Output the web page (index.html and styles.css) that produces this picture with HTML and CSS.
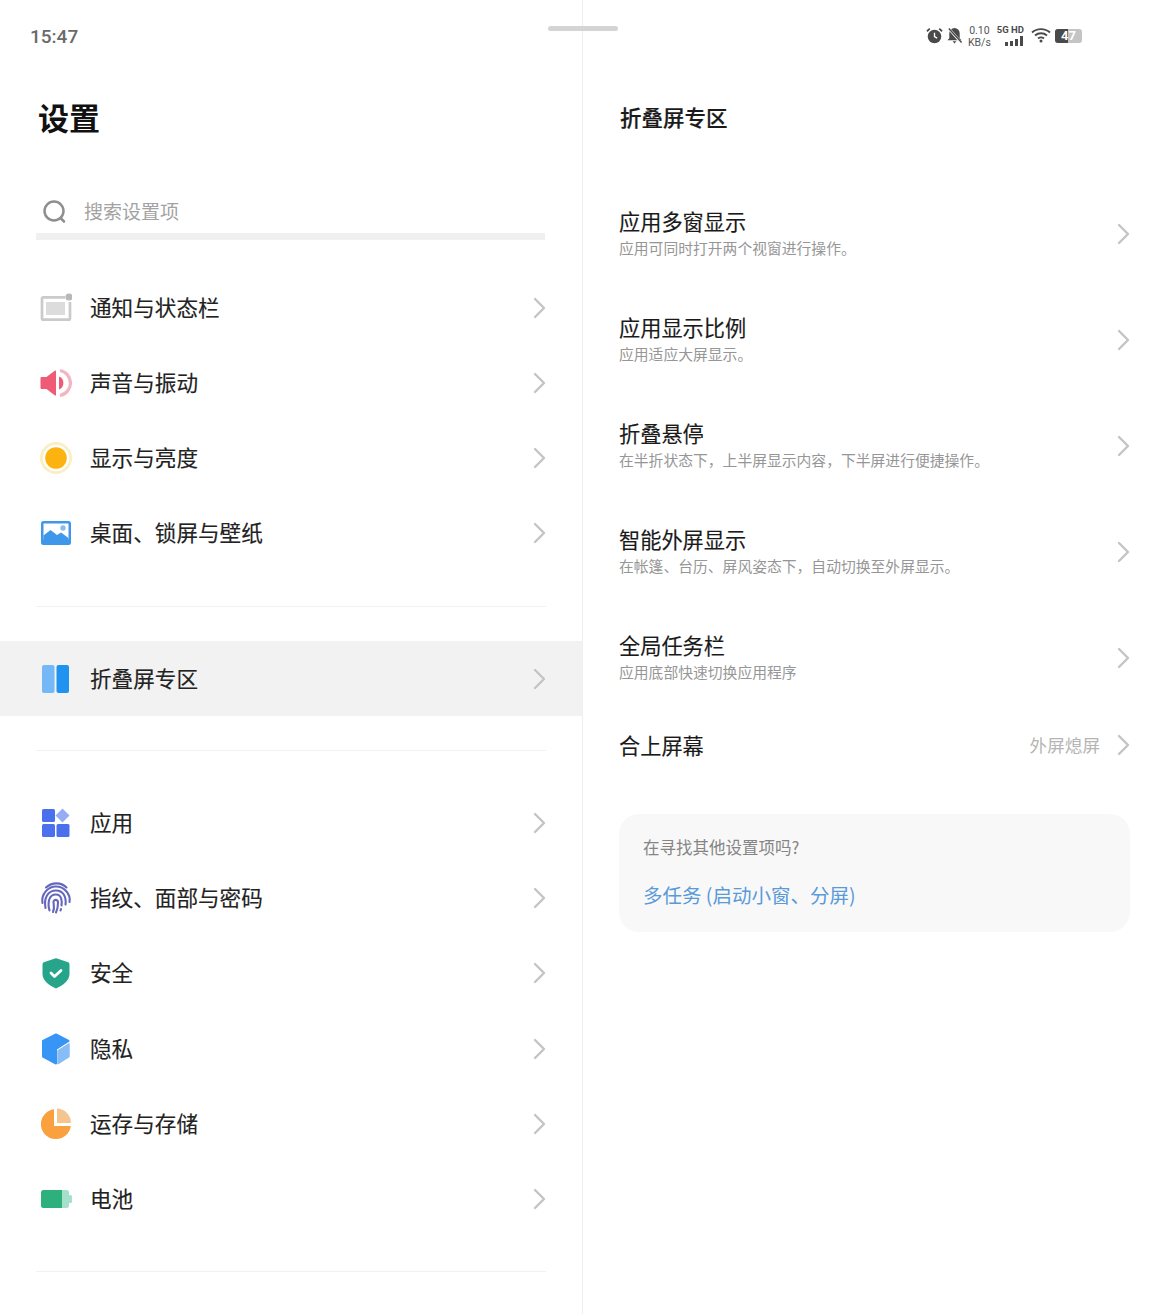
FILE: index.html
```html
<!DOCTYPE html>
<html lang="zh-CN">
<head>
<meta charset="utf-8">
<title>设置</title>
<link rel="stylesheet" href="styles.css">
</head>
<body>
<svg class="defs" width="0" height="0" aria-hidden="true"><defs>
<symbol id="chev" viewBox="0 0 14 22"><path d="M3 2l9 9-9 9" fill="none" stroke="#c4c4c4" stroke-width="2.400" stroke-linecap="round" stroke-linejoin="round"/></symbol>
</defs></svg>
<div class="handle"></div>
<main class="page">
<section class="left">
  <div class="time">15:47</div>
  <h1 class="title">设置</h1>
  <div class="search">
    <svg class="search-ic" viewBox="0 0 24 24"><circle cx="11" cy="11" r="9.500" fill="none" stroke="#8f8f8f" stroke-width="2.500"/><path d="M17.500 18l3.500 3.500" stroke="#8f8f8f" stroke-width="2.500" stroke-linecap="round"/></svg>
    <span>搜索设置项</span>
  </div>
  <ul class="group group-first">
    <li class="row"><svg class="ic" viewBox="0 0 32 32"><path d="M25 5.300H3.500a1.500 1.500 0 0 0-1.500 1.500v19.400a1.500 1.500 0 0 0 1.500 1.500h25a1.500 1.500 0 0 0 1.500-1.500V10" fill="none" stroke="#cacaca" stroke-width="2.700"/><rect x="6" y="10" width="19" height="13" fill="#dcdcdc"/><circle cx="29" cy="5" r="3.600" fill="#b8b8b8"/></svg><span class="lbl">通知与状态栏</span><svg class="chev"><use href="#chev"/></svg></li>
    <li class="row"><svg class="ic" viewBox="0 0 32 32"><path d="M1.500 10h5L15 3.500a.8.8 0 0 1 1 .6v23.800a.8.800 0 0 1-1 .6L6.500 22h-5a1 1 0 0 1-1-1V11a1 1 0 0 1 1-1z" fill="#ef5a75"/><path d="M19 9.500a7 7 0 0 1 0 13z" fill="#ef5a75"/><path d="M20 3.500a12.700 12.700 0 0 1 0 25" fill="none" stroke="#f3b5c2" stroke-width="3.200"/></svg><span class="lbl">声音与振动</span><svg class="chev"><use href="#chev"/></svg></li>
    <li class="row"><svg class="ic" viewBox="0 0 32 32"><circle cx="16" cy="16" r="16" fill="#faeec4"/><circle cx="16" cy="16" r="13.200" fill="#fff"/><circle cx="16" cy="16" r="10.800" fill="#fdb30f"/></svg><span class="lbl">显示与亮度</span><svg class="chev"><use href="#chev"/></svg></li>
    <li class="row"><svg class="ic" viewBox="0 0 32 32"><rect x="1" y="4" width="30" height="24" rx="2.500" fill="#3f97ea"/><rect x="3.500" y="6.500" width="25" height="16" fill="#fff"/><path d="M3.500 23v-4.500l7-5.500 6.500 5 4-2.500 7.500 5.500V23z" fill="#3f97ea"/><circle cx="23" cy="11" r="2.700" fill="#8cbcec"/></svg><span class="lbl">桌面、锁屏与壁纸</span><svg class="chev"><use href="#chev"/></svg></li>
  </ul>
  <ul class="group group-mid">
    <li class="row row-on"><svg class="ic" viewBox="0 0 32 32"><rect x="2" y="2" width="12.500" height="28" rx="2" fill="#74b8f8"/><rect x="16.500" y="2" width="12.500" height="28" rx="2" fill="#2093f0"/></svg><span class="lbl">折叠屏专区</span><svg class="chev"><use href="#chev"/></svg></li>
  </ul>
  <ul class="group group-last">
    <li class="row"><svg class="ic" viewBox="0 0 32 32"><rect x="2" y="2" width="13" height="13" rx="1.500" fill="#4a70ee"/><path d="M22.500 1.500l7 7-7 7-7-7z" fill="#95aef3"/><rect x="2" y="17" width="13" height="13" rx="1.500" fill="#4a70ee"/><rect x="16.500" y="17" width="13" height="13" rx="1.500" fill="#4a70ee"/></svg><span class="lbl">应用</span><svg class="chev"><use href="#chev"/></svg></li>
    <li class="row"><svg class="ic" viewBox="0 0 32 32"><g fill="none" stroke="#6567bd" stroke-width="2.100" stroke-linecap="round"><path d="M6 5.500C12 0 21 0 26.500 5.500"/><path d="M2.500 21C1 12 8 4.500 16 4.500S31 12 29.500 20"/><path d="M5.500 26C3.500 16 8 8.500 16 8.500c7 0 10.500 6 9.500 14"/><path d="M9.500 28.500C7.500 21 8.500 12.500 16 12.500c6 0 6 7 5.500 11"/><path d="M13 30c2-4 .5-8 .5-10 0-3 5-3 4.500 1 0 3-.5 6-2 9.500"/><path d="M20.500 28.500l.5-1.500"/></g></svg><span class="lbl">指纹、面部与密码</span><svg class="chev"><use href="#chev"/></svg></li>
    <li class="row"><svg class="ic" viewBox="0 0 32 32"><path d="M15 1.500a3 3 0 0 1 2 0l10.500 3.500a2.500 2.500 0 0 1 2 2.500V17c0 7-7 11.500-13.500 14.500C9.500 28.500 2.500 24 2.500 17V7.500a2.500 2.500 0 0 1 2-2.500z" fill="#27a58a"/><path d="M11 16l3.500 3.500 6.500-6" fill="none" stroke="#fff" stroke-width="2.800" stroke-linecap="round" stroke-linejoin="round"/></svg><span class="lbl">安全</span><svg class="chev"><use href="#chev"/></svg></li>
    <li class="row"><svg class="ic" viewBox="0 0 32 32"><path d="M16 1.500l12.500 6.500-12.500 8v14.500L3 23.500V8z" fill="#3795f5" stroke="#3795f5" stroke-width="2" stroke-linejoin="round"/><path d="M29 11v12.500l-11 7V18z" fill="#86bdf6" stroke="#86bdf6" stroke-width="1.500" stroke-linejoin="round"/></svg><span class="lbl">隐私</span><svg class="chev"><use href="#chev"/></svg></li>
    <li class="row"><svg class="ic" viewBox="0 0 32 32"><path d="M14 1.200A15 15 0 1 0 30.800 18H14z" fill="#f9a03f"/><path d="M17 .5A14.500 14.500 0 0 1 31 15H17z" fill="#f6c48d"/></svg><span class="lbl">运存与存储</span><svg class="chev"><use href="#chev"/></svg></li>
    <li class="row"><svg class="ic" viewBox="0 0 32 32"><path d="M3.500 7H22v18H3.500A2.500 2.500 0 0 1 1 22.500v-13A2.500 2.500 0 0 1 3.500 7z" fill="#2db07c"/><path d="M22 7h4.500A2.500 2.500 0 0 1 29 9.500v13a2.500 2.500 0 0 1-2.500 2.500H22z" fill="#a5e0ca"/><rect x="28" y="12" width="4" height="8" rx="1.500" fill="#a5e0ca"/></svg><span class="lbl">电池</span><svg class="chev"><use href="#chev"/></svg></li>
  </ul>
</section>
<section class="right">
  <div class="status">
    <svg class="st-ic" viewBox="0 0 18 18"><circle cx="9" cy="10" r="7.200" fill="#4a4a4a"/><path d="M9 6v4.200l2.800 1.600" fill="none" stroke="#fff" stroke-width="1.400"/><path d="M1 4.500 4 1.800M17 4.500 14 1.800" stroke="#4a4a4a" stroke-width="1.800"/></svg>
    <svg class="st-ic" viewBox="0 0 18 18"><path d="M9 1a5.500 5.500 0 0 1 5.500 5.500v5.500l2 2h-15l2-2V6.500A5.500 5.500 0 0 1 9 1z" fill="#4a4a4a"/><path d="M7 15h4l-2 2.500z" fill="#4a4a4a"/><path d="M1.500 0l15 17" stroke="#fff" stroke-width="2.800"/><path d="M3 1.500l13.500 15" stroke="#4a4a4a" stroke-width="1.500"/></svg>
    <div class="speed"><span>0.10</span><span>KB/s</span></div>
    <div class="net"><span class="net-t">5G HD</span><span class="bars"><i class="b1"></i><i class="b2"></i><i class="b3"></i><i class="b4"></i></span></div>
    <svg class="st-wifi" viewBox="0 0 20 16"><g fill="none" stroke="#4a4a4a" stroke-width="1.900"><path d="M1 5.500c5-4.500 13-4.500 18 0"/><path d="M4 8.500c3.500-3 8.500-3 12 0"/><path d="M7 11.500c2-1.500 4-1.500 6 0"/></g><circle cx="10" cy="14" r="1.500" fill="#4a4a4a"/></svg>
    <div class="batt"><span class="batt-fill"></span><span class="batt-t">47</span></div>
  </div>
  <h2 class="sub-title">折叠屏专区</h2>
  <ul class="opts">
    <li class="opt"><div class="opt-txt"><span class="opt-t">应用多窗显示</span><span class="opt-d">应用可同时打开两个视窗进行操作。</span></div><svg class="chev"><use href="#chev"/></svg></li>
    <li class="opt"><div class="opt-txt"><span class="opt-t">应用显示比例</span><span class="opt-d">应用适应大屏显示。</span></div><svg class="chev"><use href="#chev"/></svg></li>
    <li class="opt"><div class="opt-txt"><span class="opt-t">折叠悬停</span><span class="opt-d">在半折状态下，上半屏显示内容，下半屏进行便捷操作。</span></div><svg class="chev"><use href="#chev"/></svg></li>
    <li class="opt"><div class="opt-txt"><span class="opt-t">智能外屏显示</span><span class="opt-d">在帐篷、台历、屏风姿态下，自动切换至外屏显示。</span></div><svg class="chev"><use href="#chev"/></svg></li>
    <li class="opt"><div class="opt-txt"><span class="opt-t">全局任务栏</span><span class="opt-d">应用底部快速切换应用程序</span></div><svg class="chev"><use href="#chev"/></svg></li>
    <li class="opt opt-s"><div class="opt-txt"><span class="opt-t">合上屏幕</span></div><span class="opt-v">外屏熄屏</span><svg class="chev"><use href="#chev"/></svg></li>
  </ul>
  <div class="card">
    <p class="card-q">在寻找其他设置项吗?</p>
    <p class="card-a">多任务 (启动小窗、分屏)</p>
  </div>
</section>
</main>
</body>
</html>
```
FILE: styles.css
```css
* { box-sizing: border-box; }
html, body { margin: 0; padding: 0; background: #fff; }
body {
  width: 1166px;
  height: 1314px;
  overflow: hidden;
  position: relative;
  font-family: "Noto Sans CJK SC", "Noto Sans", sans-serif;
  color: #1a1a1a;
}
ul { list-style: none; margin: 0; padding: 0; }
h1, h2, p { margin: 0; }
.defs { position: absolute; }
.handle {
  position: absolute;
  left: 548px;
  top: 26px;
  width: 70px;
  height: 5px;
  border-radius: 3px;
  background: #d4d4d4;
}
.page { display: flex; height: 1314px; }

.left { width: 583px; height: 1314px; border-right: 1px solid #efefef; flex: none; }
.time {
  padding: 23px 0 0 30px;
  height: 49px;
  font-family: "Roboto", sans-serif;
  font-size: 19px;
  line-height: 27px;
  font-weight: 500;
  color: #6a6a6a;
}
.title {
  margin: 48px 0 0 38px;
  font-size: 31px;
  line-height: 40px;
  font-weight: 700;
  color: #111;
}
.search {
  margin: 51px 36px 0;
  height: 52px;
  width: 509px;
  display: flex;
  align-items: flex-start;
  gap: 17px;
  padding: 9px 0 0 7px;
  border-bottom: 7px solid #f0f0f0;
  font-size: 19px;
  line-height: 27px;
  color: #a3a3a3;
}
.search-ic { width: 24px; height: 24px; margin-top: 3px; flex: none; }
.group-first { margin: 30px 36px 0; padding-bottom: 35px; border-bottom: 1px solid #f1f1f1; }
.group-first .row { margin: 0 -36px; }
.group-mid { padding: 34px 0; }
.group-mid::after { content: ""; display: block; height: 1px; background: #f1f1f1; margin: 34px 36px -34px; }
.group-last { margin: 34px 36px 0; border-bottom: 1px solid #f1f1f1; padding-bottom: 34px; }
.group-last .row { margin: 0 -36px; }
.row {
  height: 75.25px;
  display: flex;
  align-items: center;
  padding: 0 36px 0 40px;
}
.row-on { background: #f2f2f2; }
.ic { width: 32px; height: 32px; flex: none; }
.lbl {
  margin: 0 0 2px 18px;
  flex: 1;
  font-size: 21.600px;
  line-height: 30px;
  color: #222;
  -webkit-text-stroke: 0.15px #222;
}
.chev { width: 14px; height: 22px; flex: none; }

.right { flex: 1; min-width: 0; padding: 0 36px; position: relative; }
.status {
  height: 70px;
  padding: 24px 48px 0 0;
  display: flex;
  align-items: flex-start;
  justify-content: flex-end;
  color: #4a4a4a;
}
.st-ic { width: 17px; height: 17px; margin: 3px 3px 0 0; flex: none; }
.speed {
  display: flex;
  flex-direction: column;
  align-items: center;
  margin: 1px 0 0 2px;
  font-family: "Roboto", sans-serif;
  font-size: 10.500px;
  line-height: 11.500px;
  color: #555;
}
.net { margin-left: 6px; display: flex; flex-direction: column; align-items: flex-end; }
.net-t { font-family: "Roboto", sans-serif; font-size: 9.500px; line-height: 11px; font-weight: 700; margin-right: -1px; }
.bars { display: flex; align-items: flex-end; gap: 2px; height: 10px; margin-top: 1px; }
.bars i { width: 3px; background: #4a4a4a; display: block; }
.b1 { height: 4px; }
.b2 { height: 5px; }
.b3 { height: 7px; }
.b4 { height: 10px; }
.st-wifi { width: 20px; height: 16px; margin: 3px 0 0 8px; flex: none; }
.batt {
  position: relative;
  width: 27px;
  height: 14px;
  margin: 5px 0 0 4px;
  border-radius: 3px;
  background: #c4c4c4;
  overflow: hidden;
  text-align: center;
  font-family: "Roboto", sans-serif;
  font-size: 13px;
  line-height: 14px;
  font-weight: 700;
  color: #fff;
}
.batt-fill { position: absolute; left: 0; top: 0; bottom: 0; width: 13px; background: #4a4a4a; }
.batt-t { position: relative; }
.sub-title { margin: 32px 0 0 1px; font-size: 21.500px; line-height: 30px; font-weight: 500; color: #1a1a1a; -webkit-text-stroke: 0.2px #1a1a1a; }
.opts { margin-top: 49px; }
.opt { height: 106px; display: flex; align-items: center; }
.opt-s { height: 72px; margin-top: -2px; }
.opt-txt { flex: 1; display: flex; flex-direction: column; padding-bottom: 3px; }
.opt-s .opt-txt { padding-bottom: 0; }
.opt-t { font-size: 21.200px; line-height: 30px; color: #1a1a1a; -webkit-text-stroke: 0.15px #1a1a1a; }
.opt-d { margin-top: 1px; font-size: 14.800px; line-height: 22px; color: #969696; }
.opt-v { font-size: 17.600px; line-height: 26px; color: #b5b5b5; margin-right: 16px; }
.card {
  margin-top: 33px;
  height: 118px;
  width: 511px;
  border-radius: 20px;
  background: #f8f8f8;
  padding: 21px 24px 0;
}
.card-q { font-size: 16.500px; line-height: 24px; color: #858585; }
.card-a { margin-top: 22px; font-size: 19.500px; line-height: 28px; color: #5a9ad8; }
```
